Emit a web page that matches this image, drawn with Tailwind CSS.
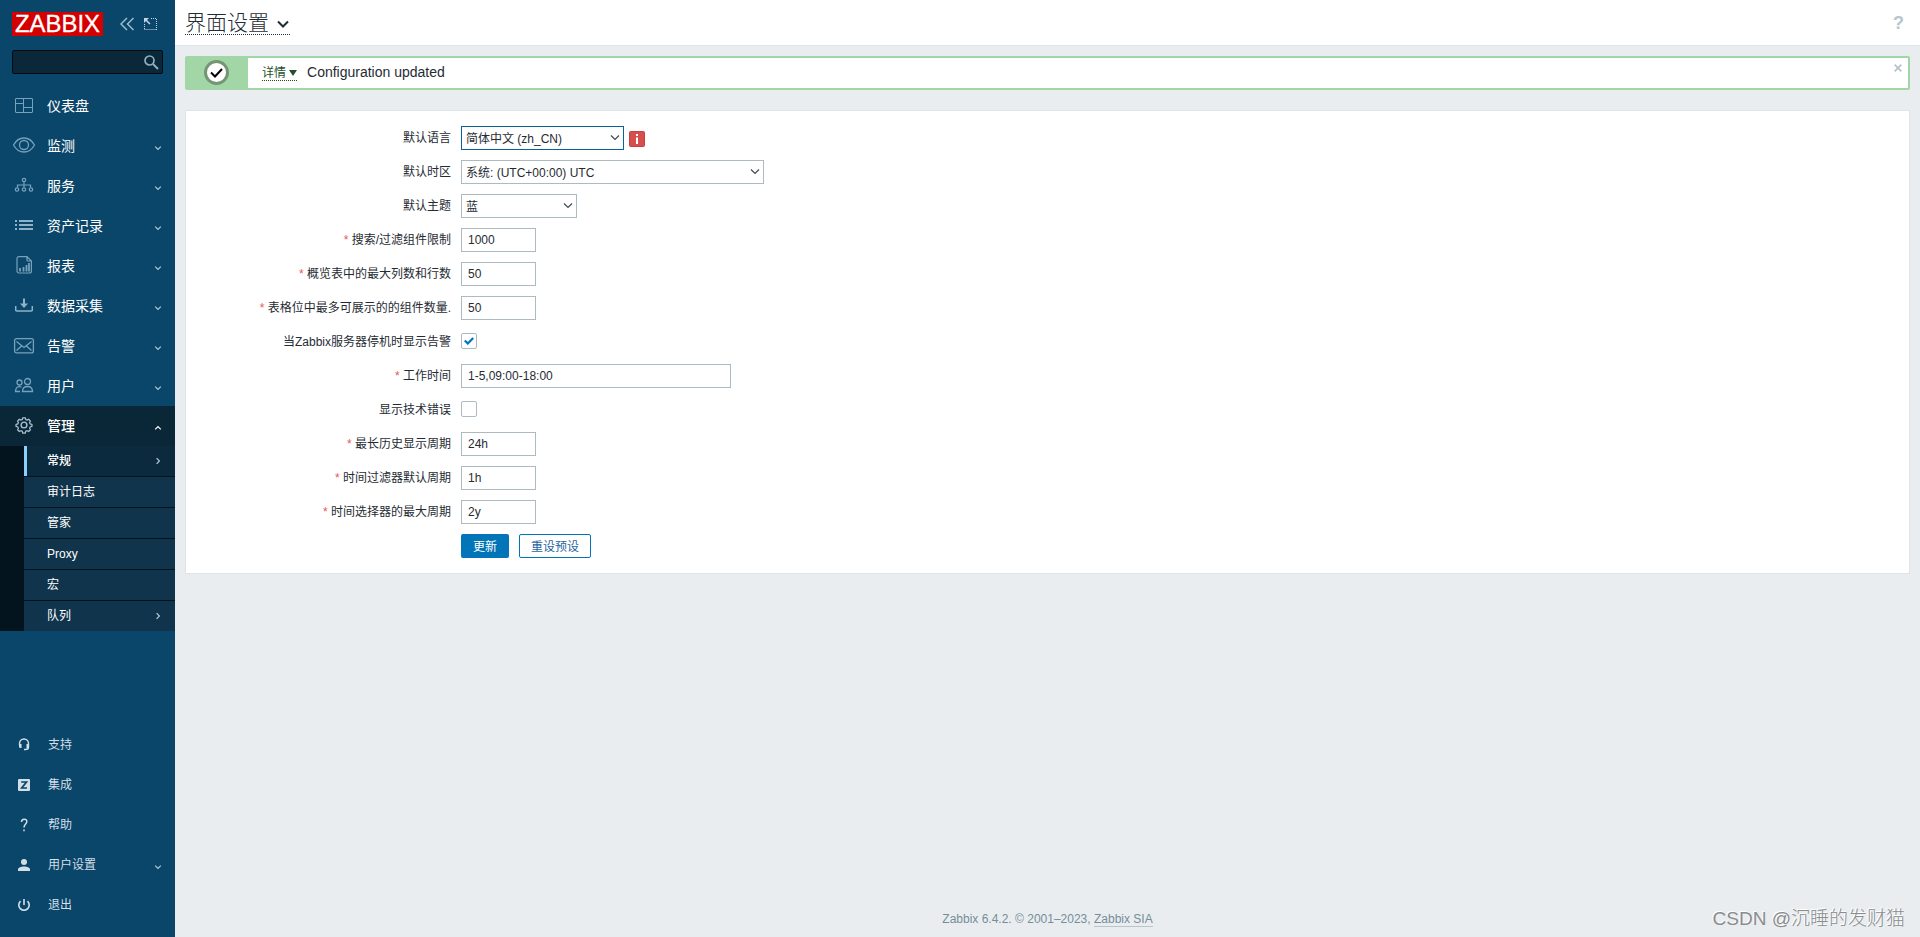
<!DOCTYPE html>
<html lang="zh-CN">
<head>
  <meta charset="UTF-8" />
  <meta name="viewport" content="width=device-width, initial-scale=1.0"/>
  <title>界面设置</title>
  <script src="https://cdn.jsdelivr.net/npm/@tailwindcss/browser@4"></script>
</head>
<body class="flex h-screen overflow-hidden bg-[#e9edf0] font-['Liberation_Sans','Noto_Sans_CJK_SC',sans-serif] text-xs leading-[14px] text-[#1f2c33]">

  <svg class="hidden">
    <symbol id="down" viewBox="0 0 8 8"><path d="M1.2 2.6 4 5.4l2.8-2.8" fill="none" stroke="currentColor" stroke-width="1.2"/></symbol>
    <symbol id="right" viewBox="0 0 8 8"><path d="M2.6 1.2 5.4 4 2.6 6.8" fill="none" stroke="currentColor" stroke-width="1.2"/></symbol>
    <symbol id="select-arrow" viewBox="0 0 10 8"><path d="m1 1.5 4 4 4-4" fill="none" stroke="currentColor" stroke-width="1.2"/></symbol>
  </svg>

  <!-- Sidebar -->
  <aside class="flex w-[175px] shrink-0 flex-col bg-[#0a466a] text-white">
    <div class="flex h-[50px] items-start pt-3 pl-3">
      <div class="flex h-6 w-[91px] items-center justify-center bg-[#d40000]">
        <svg width="91" height="24"><text x="3" y="20" font-size="23" textLength="85" lengthAdjust="spacingAndGlyphs" fill="#fff" stroke="#fff" stroke-width=".3" font-family="Liberation Sans">ZABBIX</text></svg>
      </div>
      <svg class="mt-[5px] ml-[17px] text-[#9cbccf]" width="14" height="14" fill="none" stroke="currentColor" stroke-width="1.5"><path d="M7 1 1 7l6 6M13.500 1l-6 6 6 6"/></svg>
      <svg class="mt-[5px] ml-[10px] text-[#c3d6e1]" width="13" height="14" fill="none" stroke="currentColor"><path d="M7 1.500h6M12.500 2v11M.5 12.500h12M.5 7v6" stroke-dasharray="1 1"/><path d="M1 2l5 5" stroke-width="1.500"/><path d="M0 1h5L0 6z" fill="currentColor" stroke="none"/></svg>
    </div>
    <div class="ml-3 flex h-6 w-[151px] shrink-0 items-center justify-end rounded-xs border border-[#010a10] bg-[#0a283a] pr-[3px]">
      <svg class="text-[#8fafc2]" width="15" height="15" fill="none" stroke="currentColor"><circle cx="5.500" cy="5.500" r="4.500" stroke-width="1.700"/><path d="m9 9 5 5" stroke-width="2"/></svg>
    </div>

    <nav class="mt-3 text-sm text-white">
      <a class="flex h-10 items-center pl-3">
        <svg class="text-[#78a1bb]" width="24" height="20" fill="none" stroke="currentColor"><rect x="3.500" y="2.500" width="17" height="14" rx=".5"/><path d="M11.500 2.500v14M3.500 7.500h8M11.500 11.500h9"/></svg>
        <span class="ml-[11px]">仪表盘</span>
      </a>
      <a class="flex h-10 items-center pl-3">
        <svg class="text-[#78a1bb]" width="24" height="20" fill="none" stroke="currentColor" stroke-width="1.300"><path d="M1.500 9C4 4.500 8 2 12 2s8 2.500 10.500 7C20 13.500 16 16 12 16S4 13.500 1.500 9z"/><circle cx="12" cy="9" r="4.500"/></svg>
        <span class="ml-[11px]">监测</span>
        <svg class="mt-[3px] mr-[13px] ml-auto size-2 text-[#b5cad7]"><use href="#down"/></svg>
      </a>
      <a class="flex h-10 items-center pl-3">
        <svg class="text-[#78a1bb]" width="24" height="20" fill="none" stroke="currentColor" stroke-width="1.200"><circle cx="12" cy="4" r="1.700"/><path d="M12 6v5.500M5.500 11.500V9h13v2.500"/><circle cx="5" cy="13.500" r="1.700"/><circle cx="12" cy="13.500" r="1.700"/><circle cx="19" cy="13.500" r="1.700"/></svg>
        <span class="ml-[11px]">服务</span>
        <svg class="mt-[3px] mr-[13px] ml-auto size-2 text-[#b5cad7]"><use href="#down"/></svg>
      </a>
      <a class="flex h-10 items-center pl-3">
        <svg class="text-[#8fb2c8]" width="24" height="20" fill="currentColor"><path d="M3 4h2v2H3zM7 4h14v2H7zM3 8h2v2H3zM7 8h14v2H7zM3 12h2v2H3zM7 12h14v2H7z"/></svg>
        <span class="ml-[11px]">资产记录</span>
        <svg class="mt-[3px] mr-[13px] ml-auto size-2 text-[#b5cad7]"><use href="#down"/></svg>
      </a>
      <a class="flex h-10 items-center pl-3">
        <svg class="text-[#78a1bb]" width="24" height="20" fill="none" stroke="currentColor"><path d="M7 .6h8l4.400 4.500V15a2 2 0 0 1-2 2H7a2 2 0 0 1-2-2V2.600a2 2 0 0 1 2-2zM15 .6V4q0 1 1 1h3.400" stroke-width="1.200"/><path d="M8 12v3.500M11.500 11v4.500M14.500 9v6.500M17 7v8.500" stroke-width="1.800"/></svg>
        <span class="ml-[11px]">报表</span>
        <svg class="mt-[3px] mr-[13px] ml-auto size-2 text-[#b5cad7]"><use href="#down"/></svg>
      </a>
      <a class="flex h-10 items-center pl-3">
        <svg class="text-[#8fb2c8]" width="24" height="20" fill="none" stroke="currentColor"><path d="M12 2.500v7" stroke-width="2"/><path d="M8 7.500h8L12 12z" fill="currentColor" stroke="none"/><path d="M3.700 10v4q0 1 1 1h14.600q1 0 1-1v-4" stroke-width="1.500"/></svg>
        <span class="ml-[11px]">数据采集</span>
        <svg class="mt-[3px] mr-[13px] ml-auto size-2 text-[#b5cad7]"><use href="#down"/></svg>
      </a>
      <a class="flex h-10 items-center pl-3">
        <svg class="text-[#78a1bb]" width="24" height="20" fill="none" stroke="currentColor" stroke-width="1.300"><rect x="2.600" y="2.600" width="18.800" height="14.300" rx="2"/><path d="M4.500 5.500 12 11.500l7.500-6M4.500 14.500l5-4.500M19.500 14.500l-5-4.500"/></svg>
        <span class="ml-[11px]">告警</span>
        <svg class="mt-[3px] mr-[13px] ml-auto size-2 text-[#b5cad7]"><use href="#down"/></svg>
      </a>
      <a class="flex h-10 items-center pl-3">
        <svg class="text-[#78a1bb]" width="24" height="20" fill="none" stroke="currentColor" stroke-width="1.300"><circle cx="15.500" cy="5.500" r="3"/><circle cx="7.500" cy="6.500" r="2.500"/><path d="M10.500 15.500c0-3.500 2-5 5-5s5 1.500 5 5zM9.500 11c-4-1.500-6 1-6 4.500H8"/></svg>
        <span class="ml-[11px]">用户</span>
        <svg class="mt-[3px] mr-[13px] ml-auto size-2 text-[#b5cad7]"><use href="#down"/></svg>
      </a>
      <a class="flex h-10 items-center bg-[#0a2738] pl-3 font-medium">
        <svg class="text-[#a9c2d1]" width="24" height="20" fill="none" stroke="currentColor" stroke-width="1.400"><circle cx="12" cy="9" r="2.900"/><path d="m10.600 1.700h2.800l.6 2 1.500.7 1.900-.9 1.900 1.900-.9 1.900.7 1.400 2 .7v2l-2 .7-.7 1.500.9 1.900-1.900 1.900-1.900-.9-1.500.6-.6 2h-2.800l-.6-2-1.500-.6-1.900.9-1.900-1.900.9-1.900-.7-1.500-2-.7v-2l2-.7.7-1.400-.9-1.900 1.900-1.900 1.900.9 1.500-.7z" transform="translate(1.500 .3) scale(.875)"/></svg>
        <span class="ml-[11px]">管理</span>
        <svg class="mt-[3px] mr-[13px] ml-auto size-2 rotate-180 text-white"><use href="#down"/></svg>
      </a>
    </nav>
    <div class="bg-[#04141e] pl-6 text-xs">
      <a class="flex h-[30px] items-center border-l-3 border-[#8bd0fa] bg-[#0b2a3e] pl-5 font-medium">常规<svg class="mr-[13px] ml-auto size-2 text-[#b5cad7]"><use href="#right"/></svg></a>
      <a class="mt-px flex h-[30px] items-center bg-[#0f344c] pl-[23px]">审计日志</a>
      <a class="mt-px flex h-[30px] items-center bg-[#0f344c] pl-[23px]">管家</a>
      <a class="mt-px flex h-[30px] items-center bg-[#0f344c] pl-[23px]">Proxy</a>
      <a class="mt-px flex h-[30px] items-center bg-[#0f344c] pl-[23px]">宏</a>
      <a class="mt-px flex h-[30px] items-center bg-[#0f344c] pl-[23px]">队列<svg class="mr-[13px] ml-auto size-2 text-[#b5cad7]"><use href="#right"/></svg></a>
    </div>

    <nav class="mt-auto mb-3 text-xs text-[#d3dfe6]">
      <a class="flex h-10 items-center pl-[18px]">
        <svg class="mb-px" width="12" height="13" fill="none" stroke="currentColor"><path d="M1.500 7V5.500a4.500 4.500 0 0 1 9 0V9q0 2.500-3 2.500H6" stroke-width="1.400"/><path d="M1 6h2.500v4H2.500Q1 10 1 8.500zM8.500 6H11v4H8.500z" fill="currentColor" stroke="none"/></svg>
        <span class="ml-[18px]">支持</span>
      </a>
      <a class="flex h-10 items-center pl-[18px]">
        <svg class="mb-px" width="12" height="12"><rect width="12" height="12" rx="1" fill="currentColor"/><path d="M3.200 3h5.300L3.700 9h5.300" fill="none" stroke="#0a466a" stroke-width="1.700"/></svg>
        <span class="ml-[18px]">集成</span>
      </a>
      <a class="flex h-10 items-center pl-[18px]">
        <svg class="mb-px" width="12" height="14" fill="none" stroke="currentColor" stroke-width="1.500"><path d="M3.500 4q0-2.800 2.700-2.800T8.800 3.700C8.800 6 6 6 6 9.500M6 11.500v1.700"/></svg>
        <span class="ml-[18px]">帮助</span>
      </a>
      <a class="flex h-10 items-center pl-[18px]">
        <svg class="mb-px" width="12" height="12" fill="currentColor"><circle cx="6" cy="3" r="3"/><path d="M0 12v-1.500C0 8.700 3 7.500 6 7.500s6 1.200 6 3V12z"/></svg>
        <span class="ml-[18px]">用户设置</span>
        <svg class="mt-[3px] mr-[13px] ml-auto size-2 text-[#b5cad7]"><use href="#down"/></svg>
      </a>
      <a class="flex h-10 items-center pl-[18px]">
        <svg class="mb-px" width="12" height="12" fill="none" stroke="currentColor" stroke-width="1.600"><path d="M6 0v6M2.500 2.200a5.200 5.200 0 1 0 7 0"/></svg>
        <span class="ml-[18px]">退出</span>
      </a>
    </nav>
  </aside>

  <div class="flex min-w-0 flex-1 flex-col">
    <header class="flex h-[46px] shrink-0 items-start justify-between border-b border-[#dfe4e7] bg-white pr-4 pl-2.5">
      <h1 class="mt-[11px] flex h-6 items-center border-b border-dotted border-[#1f2c33] text-[21px] leading-6 font-light">
        界面设置
        <svg class="mt-1 mr-px ml-2" width="12" height="9" fill="none" stroke="currentColor" stroke-width="2"><path d="m1 1.500 5 5 5-5"/></svg>
      </h1>
      <span class="mt-[13px] text-lg leading-5 font-bold text-[#b8c4cc]">?</span>
    </header>

    <main class="flex flex-1 flex-col px-2.5 pt-2.5">
      <div class="flex h-[34px] shrink-0 rounded-xs border-2 border-[#a3d6a7] bg-white">
        <div class="flex w-[61px] justify-center bg-[#a3d6a7] pt-0.5 pr-0.5">
          <svg width="25" height="25"><circle cx="12.500" cy="12.500" r="11" fill="#fff" stroke="#739675" stroke-width="3"/><path d="m7 12.500 4 4 7-7.500" fill="none" stroke="#000" stroke-width="2"/></svg>
        </div>
        <div class="mt-[7px] ml-3.5 flex h-4 items-center border-b border-dotted border-[#1f4a24] text-[#24512a]">
          详情<svg class="mt-px ml-[3px]" width="8" height="6" fill="currentColor"><path d="M0 0h8L4 6z"/></svg>
        </div>
        <span class="mt-1.5 ml-2.5 text-sm leading-4">Configuration updated</span>
        <svg class="mt-1.5 mr-1.5 ml-auto text-[#b8c4cc]" width="8" height="8" fill="none" stroke="currentColor" stroke-width="1.800"><path d="m.7.7 6.600 6.600M7.300.7.7 7.300"/></svg>
      </div>

      <form class="mt-5 flex h-[464px] shrink-0 flex-col gap-2.5 border border-[#dfe4e7] bg-white pt-[15px]">
        <div class="flex h-6 items-center">
          <label class="w-[265px] pb-px text-right">默认语言</label>
          <div class="ml-2.5 flex h-6 w-[163px] items-center justify-between border border-[#0a6297] pr-[3px] pl-1"><span class="pt-0.5">简体中文 (zh_CN)</span><svg width="10" height="8" class="text-[#3c4a52]"><use href="#select-arrow"/></svg></div>
          <svg class="mt-[2px] ml-[5px]" width="16" height="16"><rect x=".5" y=".5" width="15" height="15" rx="1" fill="#d64e4e" stroke="#c93f3f"/><path d="M7 3h2v2H7zM7 6.500h2V13H7z" fill="#fff"/></svg>
        </div>
        <div class="flex h-6 items-center">
          <label class="w-[265px] pb-px text-right">默认时区</label>
          <div class="ml-2.5 flex h-6 w-[303px] items-center justify-between border border-[#acbbc2] pr-[3px] pl-1"><span class="pt-0.5">系统: (UTC+00:00) UTC</span><svg width="10" height="8" class="text-[#3c4a52]"><use href="#select-arrow"/></svg></div>
        </div>
        <div class="flex h-6 items-center">
          <label class="w-[265px] pb-px text-right">默认主题</label>
          <div class="ml-2.5 flex h-6 w-[116px] items-center justify-between border border-[#acbbc2] pr-[3px] pl-1"><span class="pt-0.5">蓝</span><svg width="10" height="8" class="text-[#3c4a52]"><use href="#select-arrow"/></svg></div>
        </div>
        <div class="flex h-6 items-center">
          <label class="w-[265px] pb-px text-right"><span class="text-[#e45959]">*</span> 搜索/过滤组件限制</label>
          <input class="ml-2.5 h-6 w-[75px] border border-[#acbbc2] px-1.5" value="1000">
        </div>
        <div class="flex h-6 items-center">
          <label class="w-[265px] pb-px text-right"><span class="text-[#e45959]">*</span> 概览表中的最大列数和行数</label>
          <input class="ml-2.5 h-6 w-[75px] border border-[#acbbc2] px-1.5" value="50">
        </div>
        <div class="flex h-6 items-center">
          <label class="w-[265px] pb-px text-right"><span class="text-[#e45959]">*</span> 表格位中最多可展示的的组件数量.</label>
          <input class="ml-2.5 h-6 w-[75px] border border-[#acbbc2] px-1.5" value="50">
        </div>
        <div class="flex h-6 items-center">
          <label class="w-[265px] pb-px text-right">当Zabbix服务器停机时显示告警</label>
          <span class="mb-[2px] ml-2.5 flex size-4 items-center justify-center rounded-xs border border-[#acbbc2]"><svg width="10" height="8" fill="none" stroke="#0275b8" stroke-width="2.200"><path d="m.8 3.500 3 3L9.200 1"/></svg></span>
        </div>
        <div class="flex h-6 items-center">
          <label class="w-[265px] pb-px text-right"><span class="text-[#e45959]">*</span> 工作时间</label>
          <input class="ml-2.5 h-6 w-[270px] border border-[#acbbc2] px-1.5" value="1-5,09:00-18:00">
        </div>
        <div class="flex h-6 items-center">
          <label class="w-[265px] pb-px text-right">显示技术错误</label>
          <span class="mb-[2px] ml-2.5 size-4 rounded-xs border border-[#acbbc2]"></span>
        </div>
        <div class="flex h-6 items-center">
          <label class="w-[265px] pb-px text-right"><span class="text-[#e45959]">*</span> 最长历史显示周期</label>
          <input class="ml-2.5 h-6 w-[75px] border border-[#acbbc2] px-1.5" value="24h">
        </div>
        <div class="flex h-6 items-center">
          <label class="w-[265px] pb-px text-right"><span class="text-[#e45959]">*</span> 时间过滤器默认周期</label>
          <input class="ml-2.5 h-6 w-[75px] border border-[#acbbc2] px-1.5" value="1h">
        </div>
        <div class="flex h-6 items-center">
          <label class="w-[265px] pb-px text-right"><span class="text-[#e45959]">*</span> 时间选择器的最大周期</label>
          <input class="ml-2.5 h-6 w-[75px] border border-[#acbbc2] px-1.5" value="2y">
        </div>
        <div class="flex h-6 gap-2.5 pl-[275px]">
          <button type="button" class="h-6 w-12 rounded-xs bg-[#0275b8] pt-0.5 text-white">更新</button>
          <button type="button" class="h-6 w-[72px] rounded-xs border border-[#0275b8] pt-0.5 text-[#1f65a0]">重设预设</button>
        </div>
      </form>

      <footer class="mt-auto mb-2.5 text-center text-[#768d99]">Zabbix 6.4.2. © 2001–2023, <a class="inline-block border-b border-[#b9c5cc]">Zabbix SIA</a></footer>
    </main>
  </div>

  <div class="absolute right-[15px] bottom-1.5 text-[19px] leading-6 font-light whitespace-nowrap text-[#8a8c8e] [text-shadow:-1px_-1px_0_#fff]">CSDN @沉睡的发财猫</div>
</body>
</html>
